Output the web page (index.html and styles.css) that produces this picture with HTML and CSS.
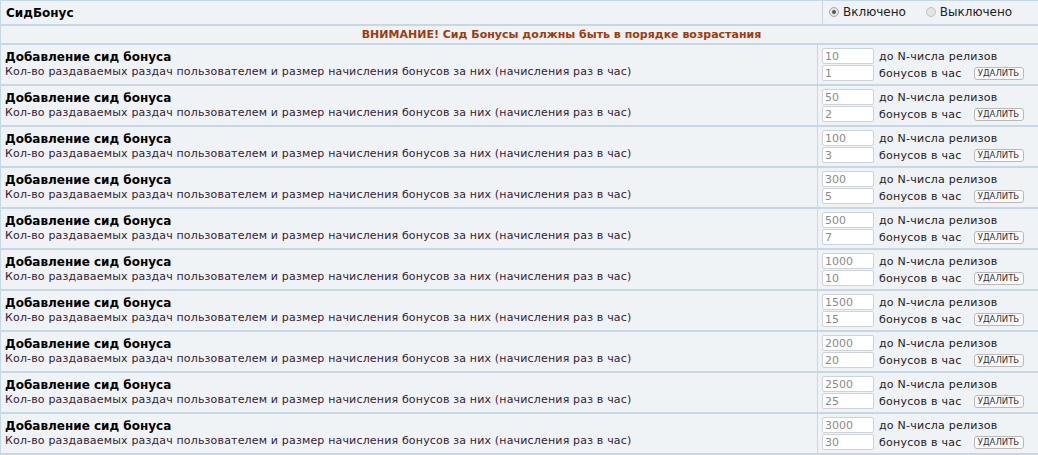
FILE: index.html
```html
<!DOCTYPE html>
<html>

<head>
  <meta charset="utf-8">
  <title>СидБонус</title>
  <link rel="stylesheet" href="styles.css">
</head>

<body>
  <table class="forumline">
    <tr class="head-row">
      <td class="row1 title-cell"><b>СидБонус</b></td>
      <td class="row1 switch-cell">
        <label class="radio"><span class="dot checked"></span>Включено</label>
        <label class="radio"><span class="dot"></span>Выключено</label>
      </td>
    </tr>
    <tr>
      <td class="row1 warn" colspan="2">ВНИМАНИЕ! Сид Бонусы должны быть в порядке возрастания</td>
    </tr>
  </table>
  <table class="forumline" id="bonus-list"></table>
  <script>
    var bonuses = [
      [10, 1], [50, 2], [100, 3], [300, 5], [500, 7],
      [1000, 10], [1500, 15], [2000, 20], [2500, 25], [3000, 30]
    ];
    var list = document.getElementById("bonus-list");
    bonuses.forEach(function(b) {
      var tr = document.createElement("tr");
      tr.className = "bonus-row";
      tr.innerHTML =
        '<td class="row1 info-cell">' +
        '<h4>Добавление сид бонуса</h4>' +
        '<p>Кол-во раздаваемых раздач пользователем и размер начисления бонусов за них (начисления раз в час)</p>' +
        '</td>' +
        '<td class="row1 edit-cell">' +
        '<div class="line"><input type="text" value="' + b[0] + '"><span>до N-числа релизов</span></div>' +
        '<div class="line"><input type="text" value="' + b[1] + '"><span>бонусов в час</span><button>удалить</button></div>' +
        '</td>';
      list.appendChild(tr);
    });
  </script>
</body>

</html>
```

FILE: styles.css
```css
/* Reset */
body,
h4,
p {
  margin: 0;
  padding: 0;
}

body {
  background-color: #eff3f6;
  font-family: "DejaVu Sans", Verdana, sans-serif;
  color: #000000;
  overflow: hidden;
}

/* Tables */
.forumline {
  width: 1122px;
  border-collapse: collapse;
  table-layout: fixed;
  border-left: 1px solid #c5d8e4;
}

.forumline:first-child {
  border-top: 1px solid #c5d8e4;
}

.row1 {
  background-color: #eff3f6;
  border-bottom: 2px solid #c5d8e4;
  padding: 0;
  vertical-align: middle;
}

/* Header */
.head-row td {
  height: 23px;
}

.title-cell {
  width: 816px;
  padding-left: 5px;
  font-size: 12px;
  border-right: 1px solid #c5d8e4;
}

.switch-cell {
  padding-left: 6px;
  font-size: 12px;
}

.radio {
  display: inline-flex;
  align-items: center;
  margin-right: 16px;
  color: #222222;
}

.dot {
  width: 10px;
  height: 10px;
  margin-right: 4px;
  border-radius: 50%;
  border: 1px solid #c2c2c2;
  background: #e4e4e4;
  box-sizing: border-box;
  position: relative;
}

.dot.checked {
  border-color: #a8a8a8;
}

.dot.checked::after {
  content: "";
  position: absolute;
  left: 2px;
  top: 2px;
  width: 4px;
  height: 4px;
  border-radius: 50%;
  background: #555555;
}

.warn {
  height: 17px;
  text-align: center;
  font-size: 11px;
  font-weight: bold;
  color: #a23a0c;
}

/* Bonus rows */
.bonus-row td {
  height: 39px;
}

.info-cell {
  width: 812px;
  padding-left: 4px;
  border-right: 1px solid #c5d8e4;
}

.info-cell h4 {
  font-size: 12px;
  line-height: 15px;
  color: #000000;
}

.info-cell p {
  font-size: 11px;
  letter-spacing: 0.17px;
  line-height: 14px;
  color: #332233;
}

.edit-cell {
  padding-left: 4px;
}

.line {
  display: flex;
  align-items: center;
  height: 17px;
  font-size: 11px;
  letter-spacing: 0.25px;
  color: #222222;
}

.line input {
  width: 52px;
  height: 16px;
  margin: 0 5px 0 0;
  padding: 0 2px;
  box-sizing: border-box;
  border: 1px solid #cdd3d8;
  border-radius: 2px;
  background: #ffffff;
  font-family: "DejaVu Sans", Verdana, sans-serif;
  font-size: 11px;
  letter-spacing: 0;
  color: #8a8a8a;
}

.line button {
  margin-left: 12px;
  width: 50px;
  height: 13px;
  padding: 0;
  border: 1px solid #b9b9b9;
  border-radius: 3px;
  background: #fbfbfb;
  font-family: "DejaVu Sans", Verdana, sans-serif;
  font-size: 8.5px;
  letter-spacing: 0;
  text-transform: uppercase;
  color: #333333;
  line-height: 11px;
}
```
